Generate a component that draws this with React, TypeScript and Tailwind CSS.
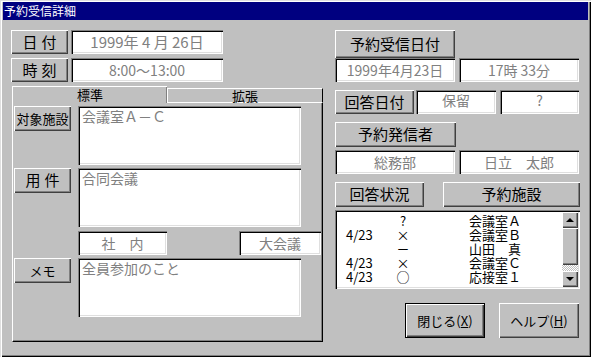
import React from 'react';

const raised =
  'bg-[#c0c0c0] shadow-[inset_1px_1px_0_#ffffff,inset_-1px_-1px_0_#404040,inset_-2px_-2px_0_#808080]';
const sunken =
  'bg-white shadow-[inset_1px_1px_0_#808080,inset_2px_2px_0_#000000,inset_-1px_-1px_0_#ffffff,inset_-2px_-2px_0_#dfdfdf]';

function Btn({ children, className = '' }: { children: React.ReactNode; className?: string }) {
  return (
    <div className={`${raised} flex items-center justify-center text-black shrink-0 ${className}`}>
      {children}
    </div>
  );
}

function Field({ children, className = '' }: { children?: React.ReactNode; className?: string }) {
  return (
    <div className={`${sunken} flex items-center justify-center text-[#808080] text-[14px] shrink-0 ${className}`}>
      {children}
    </div>
  );
}

function Memo({ children }: { children: React.ReactNode }) {
  return (
    <div className={`${sunken} w-[223px] h-[59px] pl-[4px] pt-[1px] text-[#808080] text-[14px] leading-[18px] shrink-0`}>
      {children}
    </div>
  );
}

const rows = [
  { d: '', m: '?', n: '会議室Ａ' },
  { d: '4/23', m: '×', n: '会議室Ｂ' },
  { d: '', m: '－', n: '山田　真' },
  { d: '4/23', m: '×', n: '会議室Ｃ' },
  { d: '4/23', m: '○', n: '応接室１' },
];

function ListBox() {
  return (
    <div className={`${sunken} w-[245px] h-[79px] mt-[3px] flex p-[2px]`}>
      <div className="flex-1 text-black text-[13px] leading-[14px] pt-[2px]">
        {rows.map((r, i) => (
          <div key={i} className="flex h-[14px]">
            <span className="w-[55px] pl-[9px]">{r.d}</span>
            <span className="w-[22px] text-center">{r.m}</span>
            <span className="pl-[55px]">{r.n}</span>
          </div>
        ))}
      </div>
      <div className="w-[16px] flex flex-col">
        <div className={`${raised} h-[16px] flex items-center justify-center`}>
          <div className="w-0 h-0 border-l-[4px] border-r-[4px] border-b-[4px] border-l-transparent border-r-transparent border-b-black" />
        </div>
        <div className={`${raised} h-[37px]`} />
        <div className="flex-1 bg-[repeating-conic-gradient(#ffffff_0_25%,#c0c0c0_0_50%)] bg-[length:2px_2px]" />
        <div className={`${raised} h-[16px] flex items-center justify-center`}>
          <div className="w-0 h-0 border-l-[4px] border-r-[4px] border-t-[4px] border-l-transparent border-r-transparent border-t-black" />
        </div>
      </div>
    </div>
  );
}

export default function App() {
  return (
    <div
      className="w-[591px] h-[357px] bg-[#c0c0c0] flex flex-col pt-[2px] px-[3px] shadow-[inset_1px_1px_0_#dfdfdf,inset_2px_2px_0_#ffffff,inset_-1px_-1px_0_#000000,inset_-2px_-2px_0_#808080]"
      style={{ fontFamily: "'Noto Sans CJK JP', 'Noto Sans', sans-serif" }}
    >
      <div className="h-[18px] bg-[#000080] text-white text-[12px] leading-[18px] pl-[1px]">予約受信詳細</div>

      <div className="flex pl-[8px] pt-[10px]">
        {/* left column */}
        <div className="w-[312px] flex flex-col">
          <div className="flex gap-[3px]">
            <Btn className="w-[57px] h-[24px] text-[15px] tracking-[4px] pl-[4px]">日付</Btn>
            <Field className="w-[152px] h-[24px] text-[15px]">1999年 4 月 26日</Field>
          </div>
          <div className="flex gap-[3px] mt-[4px]">
            <Btn className="w-[57px] h-[24px] text-[15px] tracking-[4px] pl-[4px]">時刻</Btn>
            <Field className="w-[152px] h-[24px]">8:00～13:00</Field>
          </div>

          {/* tabs */}
          <div className="ml-[1px] w-[311px] mt-[4px] flex flex-col">
            <div className="flex items-end h-[17px]">
              <div className="w-[155px] h-[17px] border-t border-l border-white shadow-[inset_-1px_0_0_#808080] text-[13px] leading-[15px] text-center text-black">
                標準
              </div>
              <div className="flex-1 h-[15px] border-t border-l border-b border-white border-r border-r-black text-[13px] leading-[13px] text-center text-black">
                拡張
              </div>
            </div>
            <div className="h-[239px] border-l border-white border-r border-b border-r-black border-b-black shadow-[inset_-1px_-1px_0_#808080] pl-[1px] pt-[3px] flex flex-col">
              <div className="flex gap-[7px]">
                <Btn className="w-[57px] h-[25px] text-[13px]">対象施設</Btn>
                <Memo>会議室Ａ－Ｃ</Memo>
              </div>
              <div className="flex gap-[7px] mt-[3px]">
                <Btn className="w-[57px] h-[25px] text-[15px] tracking-[4px] pl-[4px]">用件</Btn>
                <Memo>合同会議</Memo>
              </div>
              <div className="flex mt-[4px] pl-[64px]">
                <Field className="w-[89px] h-[24px]">社　内</Field>
                <Field className="w-[82px] h-[24px] ml-[72px]">大会議</Field>
              </div>
              <div className="flex gap-[7px] mt-[3px]">
                <Btn className="w-[57px] h-[25px] text-[13px]">メモ</Btn>
                <Memo>全員参加のこと</Memo>
              </div>
            </div>
          </div>
        </div>

        {/* right column */}
        <div className="w-[245px] ml-[12px] flex flex-col">
          <Btn className="w-[120px] h-[28px] text-[15px]">予約受信日付</Btn>
          <div className="flex gap-[4px]">
            <Field className="w-[120px] h-[24px]">1999年4月23日</Field>
            <Field className="w-[120px] h-[24px]">17時 33分</Field>
          </div>
          <div className="flex mt-[8px]">
            <Btn className="w-[79px] h-[24px] text-[15px]">回答日付</Btn>
            <Field className="w-[80px] h-[24px] ml-[2px] items-start">保留</Field>
            <Field className="w-[79px] h-[24px] ml-[4px] items-start">?</Field>
          </div>
          <Btn className="w-[121px] h-[25px] text-[15px] mt-[8px]">予約発信者</Btn>
          <div className="flex gap-[4px] mt-[3px]">
            <Field className="w-[120px] h-[24px]">総務部</Field>
            <Field className="w-[120px] h-[24px]">日立　太郎</Field>
          </div>
          <div className="flex mt-[8px]">
            <Btn className="w-[89px] h-[25px] text-[15px]">回答状況</Btn>
            <Btn className="w-[137px] h-[25px] text-[15px] ml-[19px]">予約施設</Btn>
          </div>
          <ListBox />
          <div className="flex justify-end gap-[14px] mt-[14px] pr-[1px]">
            <div className="w-[80px] h-[35px] border border-black">
              <Btn className="w-full h-full text-[13px]">
                閉じる(<span className="underline">X</span>)
              </Btn>
            </div>
            <Btn className="w-[80px] h-[35px] text-[13px]">
              ヘルプ(<span className="underline">H</span>)
            </Btn>
          </div>
        </div>
      </div>
    </div>
  );
}
